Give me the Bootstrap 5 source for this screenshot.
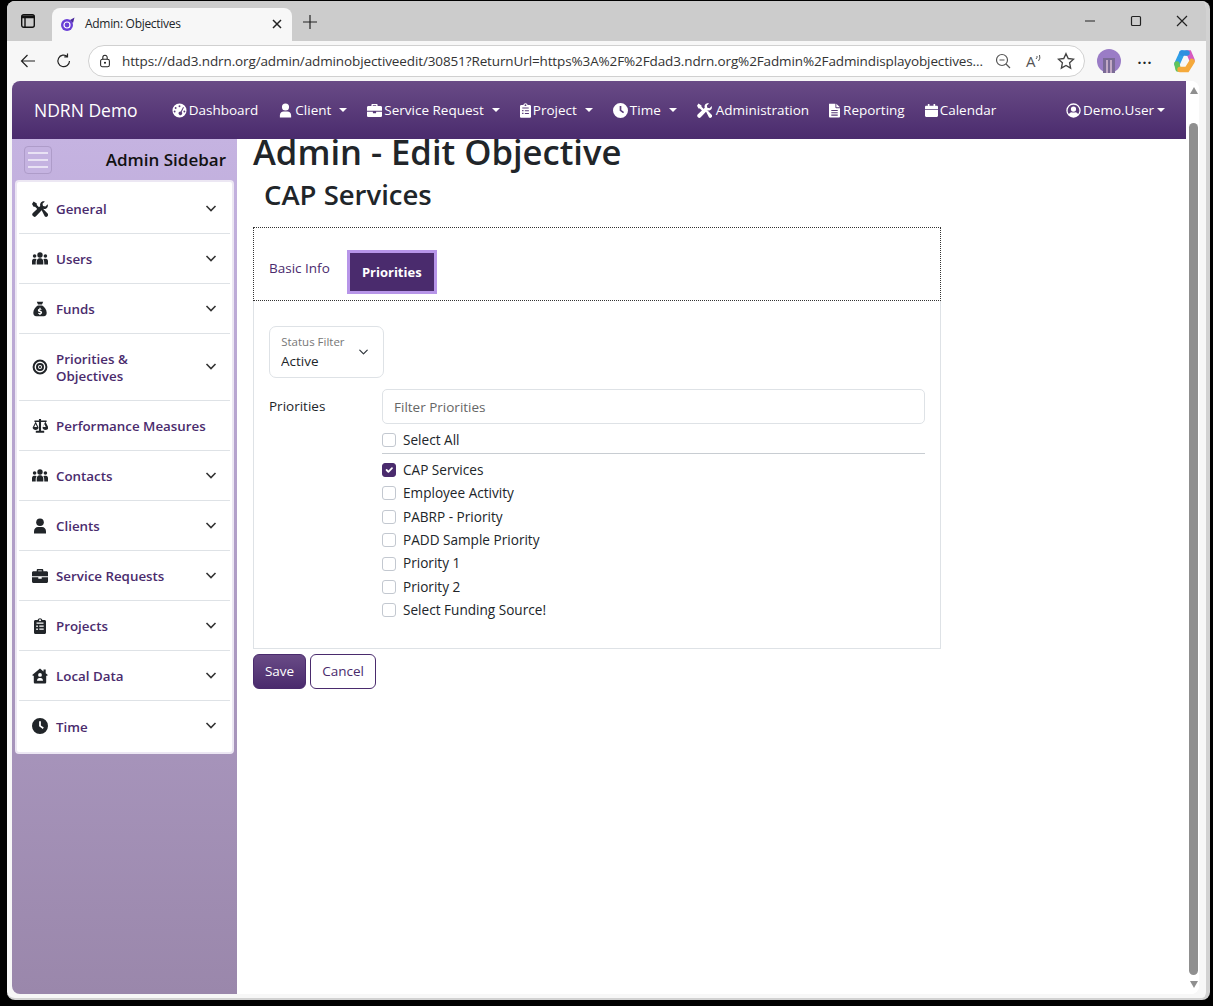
<!DOCTYPE html>
<html lang="en">
<head>
    <meta charset="UTF-8">
    <title>Admin: Objectives</title>
    <link href="https://cdn.jsdelivr.net/npm/bootstrap@5.3.3/dist/css/bootstrap.min.css" rel="stylesheet">
    <style>
        html, body { height: 100%; overflow: hidden; }
        body { background: #000; font-family: "Open Sans", "Liberation Sans", sans-serif; color: #212529; font-size: 14px; }
        .ic { width: 16px; height: 16px; fill: currentColor; flex: none; }
        .win { margin: 1px 3px 0 7px; height: 999px; background: #f7f7f7; border-radius: 8px; border-right: 4px solid #d2d2d2; border-bottom: 2px solid #d2d2d2; overflow: hidden; }

        .tabbar { height: 40px; background: #cccccc; padding-left: 14px; }
        .brtab { width: 240px; height: 33px; margin: 7px 0 0 17px; background: #f7f7f7; border-radius: 8px 8px 0 0; padding: 0 7px 2px 8px; font-size: 12px; letter-spacing: -.3px; }
        .chromebtn { width: 16px; height: 16px; stroke: #222; fill: none; stroke-width: 1.2; flex: none; }
        .addrbar { height: 40px; padding: 0 0 0 13px; }
        .urlbox { width: 997px; height: 32px; margin-left: 16px; border: 1px solid #d0d0d0; border-radius: 16px; background: #fff; padding: 0 9px 0 9px; }
        .urltxt { font-size: 13.5px; letter-spacing: -.12px; color: #333; margin-left: 10px; white-space: nowrap; overflow: hidden; }
        .readaloud { width: 20px; font-size: 15px; color: #555; margin-left: 15px; }
        .readaloud svg { width: 8px; height: 10px; margin: -6px 0 0 -1px; fill: none; stroke: #555; stroke-width: 1; }
        .moredots { width: 48px; font-size: 14px; letter-spacing: 1px; margin-top: -6px; }

        .viewport { margin-left: 5px; width: 1187px; height: 913px; background: #fff; border-radius: 8px; overflow: hidden; }
        .pagecol { width: 1174px; height: 100%; }
        .scrolly { width: 13px; height: 100%; background: #fff; padding: 6px 0 0 2px; }
        .tri-up { width: 0; height: 0; border-left: 4.5px solid transparent; border-right: 4.5px solid transparent; border-bottom: 7px solid #8f8f8f; }
        .tri-dn { width: 0; height: 0; border-left: 4.5px solid transparent; border-right: 4.5px solid transparent; border-top: 7px solid #8f8f8f; margin-top: 6px; }
        .thumb { width: 9px; height: 852px; background: #8f8f8f; border-radius: 5px; margin-top: 29px; }

        .topnav { height: 58px; background: linear-gradient(#694b86, #4a2b6d); padding: 0 11px 0 22px !important; z-index: 5; }
        .topnav .navbar-brand { font-size: 17.5px; margin-right: 24px; color: #fff; padding: 0; }
        .topnav .nav-link { color: #fff !important; font-size: 13.5px; display: flex; align-items: center; gap: 2px; padding: 0 10px !important; }
        .topnav .dropdown-toggle::after { margin-left: 6px; }
        .topnav .ic { width: 15px; height: 15px; }
        .topnav .ic.nar { width: 11px; }
        .topnav .ic.mid { width: 13px; }
        .topnav .ic.gapr { margin-right: 2px; }
        .topnav .ic.gapr1 { margin-right: 1px; }
        .topnav .tightcaret::after { margin-left: 1px; }

        .sidepanel { width: 225px; height: 855px; background: linear-gradient(#c5b3e1, #9a87ab); padding: 0 3px; flex: none; }
        .sidehead { height: 41px; padding: 0 8px 0 9px; }
        .hamb { width: 28px; height: 28px; border: 1px solid #ae9cc9; border-radius: 4px; padding: 5px 3px; background: #c5b3e1; display: flex; flex-direction: column; justify-content: space-between; }
        .hamb i { display: block; height: 2px; background: #e9e2f4; }
        .sidetitle { font-size: 17px; font-weight: 600; color: #111; }
        .sidecard { background: #fff; border: 2px solid #ece7f3; border-radius: 4px; padding: 2px 2px 1px; }
        .sideitem { min-height: 50px; border: 0; border-bottom: 1px solid #dee2e6; padding: 2px 10px 0 13px; display: flex; align-items: center; color: #4a2b6d; font-size: 13.35px; font-weight: 600; line-height: 17px; border-radius: 0 !important; }
        .sideitem:last-child { border-bottom: 0; }
        .sideitem.tall { min-height: 67px; }
        .sideitem .ic { color: #212529; margin: -2px 8px 0 0; }
        .sideitem .chev { width: 12px; height: 12px; fill: none; stroke: #333; stroke-width: 1.6; margin: -4px 3px 0 auto; flex: none; }

        .mainarea { padding: 0 0 0 16px; }
        .pagetitle { font-size: 34.6px; font-weight: 600; line-height: 26px; margin: 0; white-space: nowrap; }
        .subtitle { font-size: 27.5px; font-weight: 600; line-height: 33px; margin: 13px 0 0 11px; }
        .objpanel { width: 688px; margin-top: 16px; }
        .tabstrip { height: 74px; border: 1px dotted #333; padding: 22px 0 0 15px; }
        .tablink { color: #4a2b6d; font-size: 13.5px; margin-top: 8px; margin-right: 17px; }
        .tabactive { width: 90px; height: 44px; background: #4a2b6d; border: 3px solid #b795e8; outline: 1px solid #4a2b6d; outline-offset: -4px; color: #fff; font-weight: 700; font-size: 13px; padding-top: 1px; display: flex; align-items: center; justify-content: center; }
        .panelbody { border: 1px solid #dee2e6; border-top: 0; height: 348px; padding: 25px 15px 0 15px; }
        .statusbox { width: 115px; height: 52px; }
        .statusbox .form-select { height: 52px; min-height: 52px; font-size: 13.5px; padding: 23px 20px 5px 11px; background-position: right 13px center; background-size: 13px 10px; border-radius: 7px; }
        .statusbox label { font-size: 13.5px; padding: 15px 11px 0; color: #777; }
        .statusbox .form-select ~ label { opacity: 1; color: #777; }
        .prirow { margin-top: 11px; }
        .prilabel { width: 113px; font-size: 13.5px; padding-top: 7px; }
        .prifield { flex: 1; }
        .prifield .form-control { height: 35px; font-size: 13.5px; padding: 0 11px; border-radius: 5px; margin-bottom: 4px; }
        .prifield .form-control::placeholder { color: #666; }
        .chk { display: flex; align-items: center; margin: 0; height: 23.4px; font-size: 13.6px; min-height: 0; padding: 0; }
        .chk .form-check-input { width: 14px; height: 14px; margin: 0 7px 0 0; flex: none; border-radius: 3px; border-color: #c3c8d0; }
        .chk .form-check-input:checked { background-color: #4a2b6d; border-color: #4a2b6d; }
        .prisep { margin: 2px 0 4px; border-color: #c8cdd2; opacity: 1; }
        .formbtns { margin-top: 5px; }
        .btnsave { background: linear-gradient(#694b86, #4a2b6d); color: #fff; border: 1px solid #4a2b6d; width: 53px; height: 35px; font-size: 13.5px; padding: 0; }
        .btnsave:hover { color: #fff; }
        .btncancel { background: #fff; color: #4a2b6d; border: 1px solid #4a2b6d; width: 66px; height: 35px; font-size: 13.5px; padding: 0; }
    </style>
</head>
<body>
    <svg width="0" height="0" class="position-absolute">
        <symbol id="i-tools" viewBox="0 0 16 16">
            <path d="M1.600.4 4.800 2.600v1.500l3.400 3.400-1.700 1.700-3.400-3.400H1.600L0 3zM9.400 8.800l1.400-1.400 4.800 5a2 2 0 0 1-.1 2.800 2 2 0 0 1-2.800.1z"/>
            <path d="M15.700 3.200c.5 1.800-.1 3.500-1.500 4.300-1 .6-2.100.7-3.100.3L4 15.200a2.100 2.100 0 0 1-3-.1 2.100 2.100 0 0 1-.1-3L8.300 5c-.4-1-.3-2.100.3-3.100C9.400.5 11 0 12.800.4L10.500 2.700l.5 2.400 2.400.5z"/>
        </symbol>
        <symbol id="i-users" viewBox="0 0 16 16">
            <circle cx="2.600" cy="5" r="1.800"/><circle cx="13.400" cy="5" r="1.800"/><circle cx="8" cy="4" r="2.700"/>
            <path d="M3.700 13.500H0v-3.300c0-1.300.8-2.500 2-2.500h1.300c.5 0 1 .2 1.300.5C3.900 9.200 3.700 10 3.700 11zM12.300 13.500H16v-3.300c0-1.300-.8-2.500-2-2.500h-1.300c-.5 0-1 .2-1.300.5.600 1 .8 1.800.8 2.800zM4.700 13.500v-2.700c0-2 1.200-3.500 2.900-3.500h.8c1.700 0 2.900 1.500 2.900 3.500v2.700z"/>
        </symbol>
        <symbol id="i-bag" viewBox="0 0 16 16">
            <path fill-rule="evenodd" d="M4.800.8h6.400L10 3.600H6zM5.800 4.600h4.400c2.200 1.300 4.500 4 4.500 7.200 0 2-1 3.400-3 3.400H4.300c-2 0-3-1.400-3-3.400 0-3.200 2.300-5.900 4.500-7.200zM7.400 6.800v1C6.400 8 5.900 8.600 5.900 9.400c0 .9.700 1.300 1.600 1.600.8.200 1 .4 1 .7s-.4.500-.8.400c-.4 0-.8-.2-1.100-.4l-.6.900c.4.300 1 .5 1.400.6v.9h1.200v-1c1-.2 1.500-.9 1.500-1.700 0-.9-.6-1.400-1.700-1.700-.7-.2-1-.3-1-.6 0-.3.300-.4.700-.4.300 0 .7.100 1 .3l.5-.9c-.3-.2-.7-.3-1-.4v-.9z"/>
        </symbol>
        <symbol id="i-target" viewBox="0 0 16 16">
            <path fill-rule="evenodd" d="M8 .6a7.400 7.400 0 1 0 0 14.800A7.400 7.400 0 0 0 8 .6zm0 2a5.400 5.400 0 1 1 0 10.800A5.400 5.400 0 0 1 8 2.600zM8 4a4 4 0 1 0 0 8 4 4 0 0 0 0-8zm0 2a2 2 0 1 1 0 4 2 2 0 0 1 0-4zm0 .9a1.100 1.100 0 1 0 0 2.200 1.100 1.100 0 0 0 0-2.200z"/>
        </symbol>
        <symbol id="i-scale" viewBox="0 0 16 16">
            <path fill-rule="evenodd" d="M7 1h2v1.500h5.300v1.600h-1l2.700 5.400c0 1.500-1.300 2.500-2.800 2.500s-2.800-1-2.800-2.500l2.500-5.400H9V12.800h3v2H4v-2h3V4.100H4.100l2.500 5.400c0 1.500-1.300 2.500-2.800 2.500S1 11 1 9.500L3.700 4.100h-1V2.500H7zM3.800 6 2.500 9h2.700zM12.200 6l-1.400 3h2.700z" transform="translate(-.4 0) scale(1.050 1)"/>
        </symbol>
        <symbol id="i-user" viewBox="0 0 16 16">
            <circle cx="8" cy="4.200" r="3.800"/><path d="M2 15.500v-2.300C2 10.700 3.800 9 6 9h4c2.200 0 4 1.700 4 4.200v2.300z"/>
        </symbol>
        <symbol id="i-case" viewBox="0 0 16 16">
            <path d="M4.700 3.200V2.100c0-.7.500-1.100 1.100-1.100h4.400c.6 0 1.100.4 1.100 1.100v1.100h3.200c.8 0 1.500.6 1.500 1.400v3.600H0V4.600c0-.8.700-1.400 1.500-1.400zM6.200 3.200h3.600V2.500H6.200zM0 9.300h6.300v1.500h3.400V9.300H16v4.200c0 .8-.7 1.500-1.500 1.500h-13C.7 15 0 14.300 0 13.500z"/>
        </symbol>
        <symbol id="i-clip" viewBox="2 0 12 16">
            <path fill-rule="evenodd" d="M3.500 2H5.600a2.500 2.500 0 0 1 4.800 0h2.100c.9 0 1.500.7 1.500 1.500v11c0 .8-.6 1.500-1.500 1.500h-9c-.9 0-1.500-.7-1.500-1.500v-11C2 2.700 2.600 2 3.500 2zM8 1.200a1 1 0 1 0 0 2 1 1 0 0 0 0-2zM4.500 4.600v1.200h7V4.600zM4.300 7.400v1.500h1.500V7.400zm3 .2v1.100h4.400V7.600zM4.300 10.400v1.500h1.500v-1.500zm3 .2v1.100h4.400v-1.100z"/>
        </symbol>
        <symbol id="i-house" viewBox="0 0 16 16">
            <path fill-rule="evenodd" d="M8 .5 11.500 3.400V1.500h2.200v3.700l2.100 1.800-.9 1.100-.7-.6v6.700c0 .7-.6 1.300-1.300 1.300H3.100c-.7 0-1.300-.6-1.300-1.300V7.500l-.7.6-.9-1.100zM8 5a1.900 1.900 0 1 0 0 3.800A1.900 1.900 0 0 0 8 5zM5 12.800h6c0-1.700-1-2.900-2.300-2.900H7.300C6 9.900 5 11.100 5 12.800z"/>
        </symbol>
        <symbol id="i-clock" viewBox="0 0 16 16">
            <path fill-rule="evenodd" d="M8 0a8 8 0 1 0 0 16A8 8 0 0 0 8 0zM7.100 3.300h1.800v4.200l2.900 2.100-1 1.400-3.700-2.700z"/>
        </symbol>
        <symbol id="i-gauge" viewBox="0 0 16 16">
            <path fill-rule="evenodd" d="M8 .5a7.500 7.500 0 1 0 0 15 7.500 7.500 0 0 0 0-15zM8 2.400a1 1 0 1 1 0 2 1 1 0 0 1 0-2zM3.900 4.300a1 1 0 1 1 0 2 1 1 0 0 1 0-2zM2.800 8a1 1 0 1 1 0 2 1 1 0 0 1 0-2zM11.800 4.300l.9.500-2.400 4.700a2 2 0 1 1-1-.5zM13.200 8a1 1 0 1 1 0 2 1 1 0 0 1 0-2z"/>
        </symbol>
        <symbol id="i-file" viewBox="2 0 12 16">
            <path fill-rule="evenodd" d="M2.500.5H9v4.200c0 .5.300.8.800.8H14v9c0 .6-.4 1-1 1H3c-.6 0-1-.4-1-1V1c0-.3.200-.5.500-.5zM10 .5l4 4h-4zM4.500 7.400v1.200h7V7.400zm0 2.500v1.200h7V9.900zm0 2.500v1.200h7v-1.200z"/>
        </symbol>
        <symbol id="i-cal" viewBox="0 0 16 16">
            <path d="M3.500 0h2v2h5V0h2v2H14.500c.8 0 1.500.7 1.500 1.500V6H0V3.500C0 2.700.7 2 1.500 2H3.500zM0 7h16v7.500c0 .8-.7 1.500-1.500 1.500h-13C.7 16 0 15.300 0 14.500z"/>
        </symbol>
        <symbol id="i-ucircle" viewBox="0 0 16 16">
            <path fill-rule="evenodd" d="M8 .3a7.700 7.700 0 1 0 0 15.400A7.700 7.700 0 0 0 8 .3zm0 1.500a6.200 6.200 0 0 1 4.800 10.100c-.6-1.200-1.600-2-2.800-2-.6 0-1.200.3-2 .3s-1.400-.3-2-.3c-1.200 0-2.200.8-2.800 2A6.200 6.200 0 0 1 8 1.800zM8 3.700a2.800 2.800 0 1 0 0 5.600 2.800 2.800 0 0 0 0-5.600z"/>
        </symbol>
        <symbol id="i-chev" viewBox="0 0 12 12"><path d="M1.500 4 6 8.500 10.500 4"/></symbol>
    </svg>

    <div class="win">
        <div class="tabbar d-flex align-items-center">
            <svg class="chromebtn" width="14" height="14" viewBox="0 0 14 14" style="width:14px;height:14px;stroke:#111;stroke-width:1.400"><rect x=".7" y=".7" width="12.600" height="12.600" rx="2"/><path d="M.7 3.500h12.600M4 3.500v9.800"/><path d="M.7 2.200h12.600" stroke-width="1.600"/></svg>
            <div class="brtab d-flex align-items-center">
                <svg width="16" height="16" viewBox="0 0 16 16" class="flex-none">
                    <circle cx="7" cy="9" r="6" fill="#6a3fd6"/>
                    <circle cx="7" cy="9" r="3" fill="none" stroke="#fff" stroke-width="1.200"/>
                    <path d="M10 4 14.500 1.500 13 7z" fill="#4b2a9c"/>
                </svg>
                <span class="flex-grow-1" style="margin-left:9px">Admin: Objectives</span>
                <svg class="chromebtn" viewBox="0 0 16 16"><path d="M4 4l8 8M12 4l-8 8" stroke-width="1.500"/></svg>
            </div>
            <svg class="chromebtn" viewBox="0 0 16 16" style="margin:2px 0 0 10px"><path d="M8 1v14M1 8h14"/></svg>
            <div class="flex-grow-1"></div>
            <svg class="chromebtn" viewBox="0 0 16 16" style="margin-right:30px"><path d="M3 8h10"/></svg>
            <svg class="chromebtn" viewBox="0 0 16 16" style="margin-right:30px"><rect x="3.500" y="3.500" width="9" height="9" rx="1"/></svg>
            <svg class="chromebtn" viewBox="0 0 16 16" style="margin-right:16px"><path d="M3 3l10 10M13 3L3 13"/></svg>
        </div>

        <div class="addrbar d-flex align-items-center">
            <svg class="chromebtn" width="18" height="18" viewBox="0 0 16 16"><path d="M15 8H1.500M7.500 2 1.500 8l6 6"/></svg>
            <svg class="chromebtn" viewBox="0 0 16 16" style="margin-left:20px"><path d="M13.500 8A5.800 5.800 0 1 1 11.500 3.500M11.500 .5v3.300H8.300"/></svg>
            <div class="urlbox d-flex align-items-center">
                <svg class="chromebtn" viewBox="0 0 16 16" style="width:14px;height:14px"><rect x="3" y="6" width="10" height="8.500" rx="2"/><path d="M5.500 6V4a2.500 2.500 0 0 1 5 0v2"/><circle cx="8" cy="10" r=".6" fill="#222"/></svg>
                <div class="urltxt flex-grow-1">https://dad3.ndrn.org/admin/adminobjectiveedit/30851?ReturnUrl=https%3A%2F%2Fdad3.ndrn.org%2Fadmin%2Fadmindisplayobjectives...</div>
                <svg class="chromebtn ms-2" viewBox="0 0 16 16" style="stroke:#555"><circle cx="7" cy="7" r="5.500"/><path d="M4.500 7h5M11 11l4 4"/></svg>
                <span class="readaloud d-flex align-items-center">A<svg viewBox="0 0 8 10"><path d="M1 6a3 3 0 0 0 1-3M3.500 8a6 6 0 0 0 1-6"/></svg></span>
                <svg class="chromebtn" viewBox="0 0 16 16" style="width:18px;height:18px;stroke:#444;margin-left:11px"><path d="M8 1.500l2 4.300 4.700.6-3.500 3.200.9 4.700L8 12l-4.100 2.300.9-4.700L1.300 6.400 6 5.800z"/></svg>
            </div>
            <svg width="24" height="24" viewBox="0 0 24 24" class="flex-none" style="margin-left:12px">
                <circle cx="12" cy="12" r="12" fill="#9a7cc6"/>
                <rect x="6" y="9" width="12" height="15" fill="#7a6a96"/>
                <rect x="9" y="11" width="2" height="13" fill="#c2a9c6"/>
                <rect x="13" y="11" width="2" height="13" fill="#c2a9c6"/>
            </svg>
            <span class="moredots fw-bold text-center">...</span>
            <svg width="24" height="24" viewBox="0 0 24 24" class="flex-none" style="margin-left:3px" fill="none" stroke-width="5.500" stroke-linecap="round">
                <path d="M10 4 5 15" stroke="#2f9fe8"/>
                <path d="M5 15 6 20" stroke="#63c45a"/>
                <path d="M15 4h2l3 7" stroke="#d65ac0"/>
                <path d="M8 20.500h7l5-8" stroke="#f5a93b"/>
                <path d="M10 4h5" stroke="#2f8fe0"/>
            </svg>
        </div>

        <div class="viewport d-flex">
            <div class="pagecol d-flex flex-column">
                <nav class="navbar navbar-expand navbar-dark topnav">
                    <a class="navbar-brand" href="#">NDRN Demo</a>
                    <ul class="navbar-nav flex-grow-1">
                        <li class="nav-item"><a class="nav-link" href="#"><svg class="ic"><use href="#i-gauge"/></svg>Dashboard</a></li>
                        <li class="nav-item"><a class="nav-link dropdown-toggle" href="#"><svg class="ic"><use href="#i-user"/></svg>Client</a></li>
                        <li class="nav-item"><a class="nav-link dropdown-toggle" href="#"><svg class="ic"><use href="#i-case"/></svg>Service Request</a></li>
                        <li class="nav-item"><a class="nav-link dropdown-toggle" href="#"><svg class="ic nar"><use href="#i-clip"/></svg>Project</a></li>
                        <li class="nav-item"><a class="nav-link dropdown-toggle" href="#"><svg class="ic"><use href="#i-clock"/></svg>Time</a></li>
                        <li class="nav-item"><a class="nav-link" href="#"><svg class="ic gapr"><use href="#i-tools"/></svg>Administration</a></li>
                        <li class="nav-item"><a class="nav-link" href="#"><svg class="ic nar gapr1"><use href="#i-file"/></svg>Reporting</a></li>
                        <li class="nav-item"><a class="nav-link" href="#"><svg class="ic mid"><use href="#i-cal"/></svg>Calendar</a></li>
                        <li class="nav-item ms-auto"><a class="nav-link dropdown-toggle tightcaret" href="#"><svg class="ic"><use href="#i-ucircle"/></svg>Demo.User</a></li>
                    </ul>
                </nav>
                <div class="d-flex flex-grow-1">
                    <aside class="sidepanel">
                        <div class="sidehead d-flex align-items-center justify-content-between">
                            <div class="hamb"><i></i><i></i><i></i></div>
                            <div class="sidetitle">Admin Sidebar</div>
                        </div>
                        <div class="sidecard">
                            <div class="list-group list-group-flush">
                                <a href="#" class="list-group-item sideitem"><svg class="ic"><use href="#i-tools"/></svg>General<svg class="chev"><use href="#i-chev"/></svg></a>
                                <a href="#" class="list-group-item sideitem"><svg class="ic"><use href="#i-users"/></svg>Users<svg class="chev"><use href="#i-chev"/></svg></a>
                                <a href="#" class="list-group-item sideitem"><svg class="ic"><use href="#i-bag"/></svg>Funds<svg class="chev"><use href="#i-chev"/></svg></a>
                                <a href="#" class="list-group-item sideitem tall"><svg class="ic"><use href="#i-target"/></svg><span>Priorities &amp;<br>Objectives</span><svg class="chev"><use href="#i-chev"/></svg></a>
                                <a href="#" class="list-group-item sideitem"><svg class="ic"><use href="#i-scale"/></svg>Performance Measures</a>
                                <a href="#" class="list-group-item sideitem"><svg class="ic"><use href="#i-users"/></svg>Contacts<svg class="chev"><use href="#i-chev"/></svg></a>
                                <a href="#" class="list-group-item sideitem"><svg class="ic"><use href="#i-user"/></svg>Clients<svg class="chev"><use href="#i-chev"/></svg></a>
                                <a href="#" class="list-group-item sideitem"><svg class="ic"><use href="#i-case"/></svg>Service Requests<svg class="chev"><use href="#i-chev"/></svg></a>
                                <a href="#" class="list-group-item sideitem"><svg class="ic"><use href="#i-clip"/></svg>Projects<svg class="chev"><use href="#i-chev"/></svg></a>
                                <a href="#" class="list-group-item sideitem"><svg class="ic"><use href="#i-house"/></svg>Local Data<svg class="chev"><use href="#i-chev"/></svg></a>
                                <a href="#" class="list-group-item sideitem"><svg class="ic"><use href="#i-clock"/></svg>Time<svg class="chev"><use href="#i-chev"/></svg></a>
                            </div>
                        </div>
                    </aside>
                    <main class="mainarea flex-grow-1">
                        <h1 class="pagetitle">Admin - Edit Objective</h1>
                        <h3 class="subtitle">CAP Services</h3>
                        <div class="objpanel">
                            <div class="tabstrip d-flex align-items-start">
                                <a href="#" class="tablink text-decoration-none">Basic Info</a>
                                <a href="#" class="tabactive text-decoration-none">Priorities</a>
                            </div>
                            <div class="panelbody">
                                <div class="form-floating statusbox">
                                    <select class="form-select" id="statusFilter"><option>Active</option></select>
                                    <label for="statusFilter">Status Filter</label>
                                </div>
                                <div class="d-flex prirow">
                                    <div class="prilabel">Priorities</div>
                                    <div class="prifield">
                                        <input class="form-control" placeholder="Filter Priorities">
                                        <label class="chk"><input class="form-check-input" type="checkbox">Select All</label>
                                        <hr class="prisep">
                                        <label class="chk"><input class="form-check-input" type="checkbox" checked>CAP Services</label>
                                        <label class="chk"><input class="form-check-input" type="checkbox">Employee Activity</label>
                                        <label class="chk"><input class="form-check-input" type="checkbox">PABRP - Priority</label>
                                        <label class="chk"><input class="form-check-input" type="checkbox">PADD Sample Priority</label>
                                        <label class="chk"><input class="form-check-input" type="checkbox">Priority 1</label>
                                        <label class="chk"><input class="form-check-input" type="checkbox">Priority 2</label>
                                        <label class="chk"><input class="form-check-input" type="checkbox">Select Funding Source!</label>
                                    </div>
                                </div>
                            </div>
                            <div class="d-flex gap-1 formbtns">
                                <button class="btn btnsave">Save</button>
                                <button class="btn btncancel">Cancel</button>
                            </div>
                        </div>
                    </main>
                </div>
            </div>
            <div class="scrolly d-flex flex-column align-items-center">
                <div class="tri-up"></div>
                <div class="thumb"></div>
                <div class="tri-dn"></div>
            </div>
        </div>
    </div>

    <script src="https://cdn.jsdelivr.net/npm/bootstrap@5.3.3/dist/js/bootstrap.bundle.min.js"></script>
</body>
</html>
